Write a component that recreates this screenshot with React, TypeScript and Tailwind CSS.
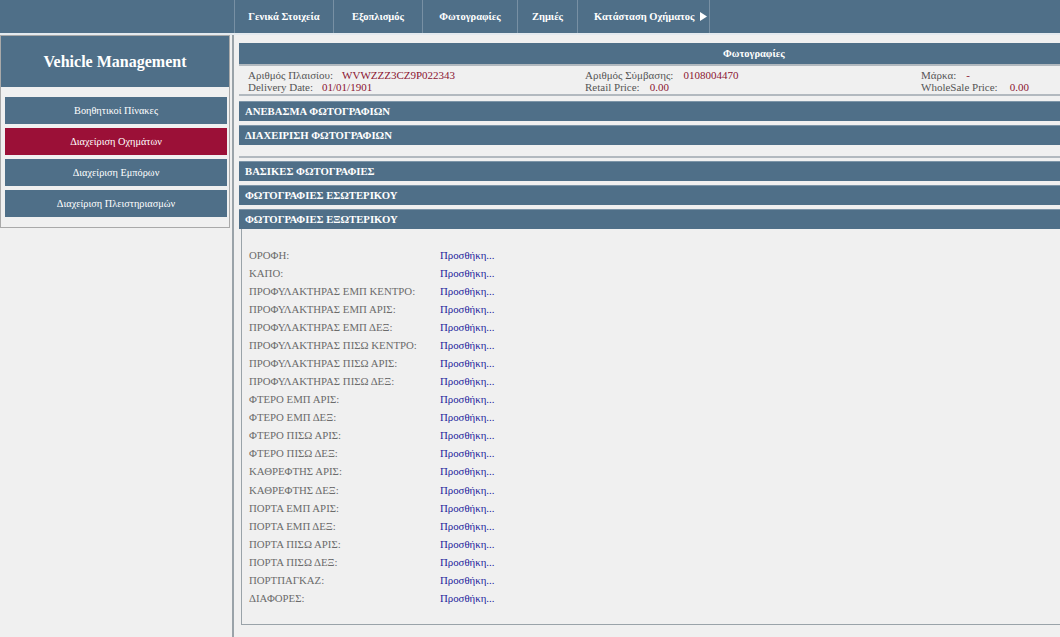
import React from 'react';

const navItems = [
    { label: 'Γενικά Στοιχεία', w: 'w-[99px]' },
    { label: 'Εξοπλισμός', w: 'w-[89px]' },
    { label: 'Φωτογραφίες', w: 'w-[95px]' },
    { label: 'Ζημιές', w: 'w-[60px]' },
];

const menu = [
    { label: 'Βοηθητικοί Πίνακες', active: false },
    { label: 'Διαχείριση Οχημάτων', active: true },
    { label: 'Διαχείριση Εμπόρων', active: false },
    { label: 'Διαχείριση Πλειστηριασμών', active: false },
];

const photos = [
    'ΟΡΟΦΗ:',
    'ΚΑΠΟ:',
    'ΠΡΟΦΥΛΑΚΤΗΡΑΣ ΕΜΠ ΚΕΝΤΡΟ:',
    'ΠΡΟΦΥΛΑΚΤΗΡΑΣ ΕΜΠ ΑΡΙΣ:',
    'ΠΡΟΦΥΛΑΚΤΗΡΑΣ ΕΜΠ ΔΕΞ:',
    'ΠΡΟΦΥΛΑΚΤΗΡΑΣ ΠΙΣΩ ΚΕΝΤΡΟ:',
    'ΠΡΟΦΥΛΑΚΤΗΡΑΣ ΠΙΣΩ ΑΡΙΣ:',
    'ΠΡΟΦΥΛΑΚΤΗΡΑΣ ΠΙΣΩ ΔΕΞ:',
    'ΦΤΕΡΟ ΕΜΠ ΑΡΙΣ:',
    'ΦΤΕΡΟ ΕΜΠ ΔΕΞ:',
    'ΦΤΕΡΟ ΠΙΣΩ ΑΡΙΣ:',
    'ΦΤΕΡΟ ΠΙΣΩ ΔΕΞ:',
    'ΚΑΘΡΕΦΤΗΣ ΑΡΙΣ:',
    'ΚΑΘΡΕΦΤΗΣ ΔΕΞ:',
    'ΠΟΡΤΑ ΕΜΠ ΑΡΙΣ:',
    'ΠΟΡΤΑ ΕΜΠ ΔΕΞ:',
    'ΠΟΡΤΑ ΠΙΣΩ ΑΡΙΣ:',
    'ΠΟΡΤΑ ΠΙΣΩ ΔΕΞ:',
    'ΠΟΡΤΠΑΓΚΑΖ:',
    'ΔΙΑΦΟΡΕΣ:',
];

const SectionBar = ({ title }: { title: string }) => (
    <div className="h-[20px] bg-[#4f6f88] border-t border-[#7d95a8] flex items-center px-[6px] text-white font-bold text-[10.7px] leading-none">
        {title}
    </div>
);

export default function App() {
    return (
        <div className="w-[1060px] h-[637px] overflow-hidden bg-[#f0f0f0] font-['Liberation_Serif','DejaVu_Serif',serif]">
            {/* top nav */}
            <div className="h-[35px] bg-[#4f6f88] border-b-2 border-[#e4eaef] flex pl-[234px]">
                {navItems.map((item) => (
                    <div key={item.label} className={`${item.w} border-l border-[#7890a4] flex items-center justify-center text-white font-bold text-[10.5px]`}>
                        {item.label}
                    </div>
                ))}
                <div className="w-[133px] border-l border-r border-[#7890a4] pl-[16px] flex items-center text-white font-bold text-[10.5px] gap-[5px]">
                    Κατάσταση Οχήματος
                    <svg width="7" height="9" viewBox="0 0 7 9"><path d="M0 0 L7 4.5 L0 9 Z" fill="#ffffff" /></svg>
                </div>
            </div>

            <div className="flex h-[602px]">
                {/* sidebar */}
                <div className="w-[232px] shrink-0">
                    <div className="border border-[#a9a9a9] bg-[#f0f0f0] w-[230px] pb-[10px]">
                        <div className="h-[51px] bg-[#4f6f88] flex items-center justify-center text-white font-bold text-[16px]">
                            Vehicle Management
                        </div>
                        <div className="flex flex-col gap-[4px] mt-[10px] pl-[4px] pr-[2px]">
                            {menu.map((m) => (
                                <div
                                    key={m.label}
                                    className={
                                        m.active
                                            ? 'h-[27px] bg-[#9b1037] flex items-center justify-center text-white text-[10.3px]'
                                            : 'h-[27px] bg-[#4f6f88] flex items-center justify-center text-white text-[10.3px]'
                                    }
                                >
                                    {m.label}
                                </div>
                            ))}
                        </div>
                    </div>
                </div>

                {/* main */}
                <div className="flex-1 border-l-2 border-[#9aa3a9] pl-[5px] pt-[8px]">
                    <div className="h-[21px] bg-[#4f6f88] flex items-center pl-[484px] text-white font-bold text-[10.5px]">
                        Φωτογραφίες
                    </div>
                    <div className="h-[32px] border-t-2 border-b-2 border-[#b2b9bf] bg-[#f0f0f0] flex text-[11px] leading-[12px] text-[#555] pt-[3px]">
                        <div className="w-[346px] pl-[9px]">
                            <div>Αριθμός Πλαισίου:<span className="ml-[9px] text-[#8b1430]">WVWZZZ3CZ9P022343</span></div>
                            <div>Delivery Date:<span className="ml-[9px] text-[#8b1430]">01/01/1901</span></div>
                        </div>
                        <div className="w-[336px]">
                            <div>Αριθμός Σύμβασης:<span className="ml-[10px] text-[#8b1430]">0108004470</span></div>
                            <div>Retail Price:<span className="ml-[10px] text-[#8b1430]">0.00</span></div>
                        </div>
                        <div>
                            <div>Μάρκα:<span className="ml-[10px] text-[#8b1430]">-</span></div>
                            <div>WholeSale Price:<span className="ml-[12px] text-[#8b1430]">0.00</span></div>
                        </div>
                    </div>
                    <div className="mt-[5px]">
                        <SectionBar title="ΑΝΕΒΑΣΜΑ ΦΩΤΟΓΡΑΦΙΩΝ" />
                    </div>
                    <div className="mt-[4px]">
                        <SectionBar title="ΔΙΑΧΕΙΡΙΣΗ ΦΩΤΟΓΡΑΦΙΩΝ" />
                        <div className="h-[13px] border-b-2 border-[#b2b9bf]"></div>
                    </div>
                    <div className="mt-[3px]">
                        <SectionBar title="ΒΑΣΙΚΕΣ ΦΩΤΟΓΡΑΦΙΕΣ" />
                    </div>
                    <div className="mt-[4px]">
                        <SectionBar title="ΦΩΤΟΓΡΑΦΙΕΣ ΕΣΩΤΕΡΙΚΟΥ" />
                    </div>
                    <div className="mt-[4px]">
                        <SectionBar title="ΦΩΤΟΓΡΑΦΙΕΣ ΕΞΩΤΕΡΙΚΟΥ" />
                        <div className="h-[396px] border-l border-b border-[#9aa3a9] ml-[2px] pt-[17px] pl-[7px]">
                            {photos.map((p) => (
                                <div key={p} className="flex h-[18.05px] items-center text-[10.8px]">
                                    <div className="w-[191px] text-[#6b6b6b]">{p}</div>
                                    <div className="text-[#1c1c9c]">Προσθήκη...</div>
                                </div>
                            ))}
                        </div>
                    </div>
                </div>
            </div>
        </div>
    );
}
